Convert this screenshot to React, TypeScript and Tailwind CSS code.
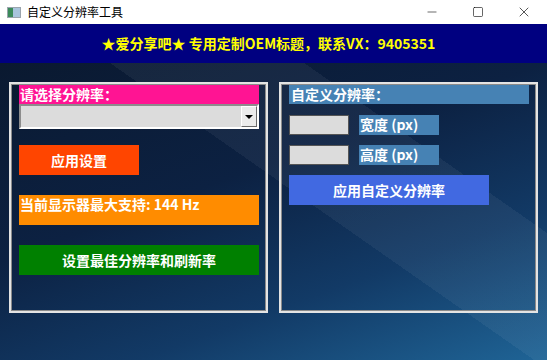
import { Minus, Square, X } from "lucide-react";

const cjk = { fontFamily: '"SimSun", "Noto Sans CJK SC", "Liberation Sans", sans-serif' };

function TitleBar() {
  return (
    <div className="flex h-[24px] items-center bg-white font-normal text-black">
      <div className="ml-[7px] flex h-[11px] w-[14px] items-stretch border border-[#9aa4ad] bg-[#e8eef4]">
        <div className="w-[5px] bg-[#3b8a5a]" />
        <div className="flex-1 bg-[#a8c4dc]" />
      </div>
      <div className="ml-[6px] text-[12px] font-normal" style={cjk}>自定义分辨率工具</div>
      <div className="ml-auto flex h-full items-center">
        <div className="flex w-[46px] justify-center"><Minus size={14} strokeWidth={1} /></div>
        <div className="flex w-[46px] justify-center"><Square size={12} strokeWidth={1.2} /></div>
        <div className="flex w-[46px] justify-center"><X size={16} strokeWidth={1} /></div>
      </div>
    </div>
  );
}

function Panel({ children }: { children: React.ReactNode }) {
  return (
    <div className="h-[231px] w-[259px] border-2 border-[#e4e4e4] pl-[8px] pr-[7px] pt-[1px] shadow-[inset_0_0_0_1px_#8a8a8a]">
      {children}
    </div>
  );
}

export default function App() {
  return (
    <div className="flex h-[360px] w-[547px] flex-col overflow-hidden" style={cjk}>
      <TitleBar />
      <div className="flex h-[39px] items-center justify-center bg-[#000080] pr-[10px] text-[14px] font-bold text-[#ffff00]">
        ★爱分享吧★ 专用定制OEM标题，联系VX：9405351
      </div>
      <div className="relative flex-1 bg-[linear-gradient(160deg,#0a1930_0%,#0c2142_40%,#123a66_70%,#1f6496_100%)]">
        <div className="pointer-events-none absolute inset-0 bg-[linear-gradient(35deg,transparent_55%,rgba(255,255,255,0.05)_55%,rgba(255,255,255,0.05)_75%,transparent_75%)]" />
        <div className="relative flex gap-[11px] pl-[9px] pt-[19px] text-[14px] font-bold text-white">
          <Panel>
            <div className="h-[19px] bg-[#ff1493] pl-[1px] leading-[18px]">请选择分辨率：</div>
            <div className="flex h-[25px] border-2 border-t-[#8c8c8c] border-l-[#8c8c8c] border-b-white border-r-white bg-[#dcdcdc]">
              <div className="flex-1" />
              <div className="flex w-[16px] items-center justify-center border border-t-white border-l-white border-b-[#6a6a6a] border-r-[#6a6a6a] bg-[#ececec]">
                <div className="h-0 w-0 border-x-[4px] border-t-[4px] border-x-transparent border-t-black" />
              </div>
            </div>
            <div className="mt-[16px] flex h-[30px] w-[120px] items-center justify-center bg-[#ff4500]">应用设置</div>
            <div className="mt-[20px] h-[30px] bg-[#ff8c00] pl-[1px] leading-[18px]">当前显示器最大支持: 144 Hz</div>
            <div className="mt-[20px] flex h-[30px] items-center justify-center bg-[#008000]">设置最佳分辨率和刷新率</div>
          </Panel>
          <Panel>
            <div className="h-[19px] bg-[#4682b4] pl-[2px] leading-[18px]">自定义分辨率：</div>
            <div className="mt-[11px] flex items-center gap-[10px]">
              <div className="h-[20px] w-[60px] border border-[#555] bg-[#dcdcdc]" />
              <div className="h-[20px] w-[80px] bg-[#4682b4] pl-[1px] leading-[19px]">宽度 (px)</div>
            </div>
            <div className="mt-[10px] flex items-center gap-[10px]">
              <div className="h-[20px] w-[60px] border border-[#555] bg-[#dcdcdc]" />
              <div className="h-[20px] w-[80px] bg-[#4682b4] pl-[1px] leading-[19px]">高度 (px)</div>
            </div>
            <div className="mt-[10px] flex h-[30px] w-[200px] items-center justify-center bg-[#4169e1]">应用自定义分辨率</div>
          </Panel>
        </div>
      </div>
    </div>
  );
}
